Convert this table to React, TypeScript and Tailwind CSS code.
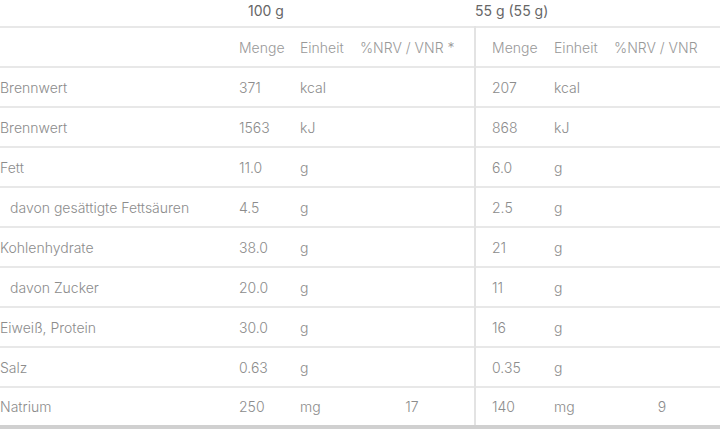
import React from "react";

type Row = {
  label: string;
  indent?: boolean;
  a: [string, string, string];
  b: [string, string, string];
};

const rows: Row[] = [
  { label: "Brennwert", a: ["371", "kcal", ""], b: ["207", "kcal", ""] },
  { label: "Brennwert", a: ["1563", "kJ", ""], b: ["868", "kJ", ""] },
  { label: "Fett", a: ["11.0", "g", ""], b: ["6.0", "g", ""] },
  { label: "davon gesättigte Fettsäuren", indent: true, a: ["4.5", "g", ""], b: ["2.5", "g", ""] },
  { label: "Kohlenhydrate", a: ["38.0", "g", ""], b: ["21", "g", ""] },
  { label: "davon Zucker", indent: true, a: ["20.0", "g", ""], b: ["11", "g", ""] },
  { label: "Eiweiß, Protein", a: ["30.0", "g", ""], b: ["16", "g", ""] },
  { label: "Salz", a: ["0.63", "g", ""], b: ["0.35", "g", ""] },
  { label: "Natrium", a: ["250", "mg", "17"], b: ["140", "mg", "9"] },
];

const line = "border-b-2 border-[#e8e8e8]";

export default function App() {
  return (
    <div
      className="w-[720px] h-[430px] overflow-hidden bg-white text-[14px] font-light text-[#8c8c8c]"
      style={{ fontFamily: "Inter, Roboto, 'Liberation Sans', sans-serif" }}
    >
      <table className="w-[720px] border-collapse table-fixed">
        <colgroup>
          <col className="w-[239px]" />
          <col className="w-[61px]" />
          <col className="w-[60px]" />
          <col className="w-[115px]" />
          <col className="w-[79px]" />
          <col className="w-[60px]" />
          <col className="w-[106px]" />
        </colgroup>
        <thead>
          <tr className={`h-[26px] ${line}`}>
            <th className="p-0" />
            <th colSpan={3} className="p-0 pl-[9px] pb-[5px] text-left font-normal text-[#666]">
              100 g
            </th>
            <th colSpan={3} className="p-0 pb-[5px] text-left font-normal text-[#666]">
              55 g (55 g)
            </th>
          </tr>
          <tr className={`h-[40px] ${line}`}>
            <th className="p-0" />
            <th className="p-0 text-left font-light text-[#999]">Menge</th>
            <th className="p-0 text-left font-light text-[#999]">Einheit</th>
            <th className="p-0 text-left font-light text-[#999] border-r-2 border-[#e3e3e3]">
              %NRV / VNR *
            </th>
            <th className="p-0 pl-[16px] text-left font-light text-[#999]">Menge</th>
            <th className="p-0 text-left font-light text-[#999]">Einheit</th>
            <th className="p-0 text-left font-light text-[#999]">%NRV / VNR</th>
          </tr>
        </thead>
        <tbody>
          {rows.map((r, i) => (
            <tr
              key={i}
              className={`h-[40px] ${
                i === rows.length - 1 ? "border-b-4 border-[#d0d0d0]" : line
              }`}
            >
              <td className={`p-0 ${r.indent ? "pl-[10px]" : ""}`}>{r.label}</td>
              <td className="p-0">{r.a[0]}</td>
              <td className="p-0">{r.a[1]}</td>
              <td className="p-0 pr-[10px] text-center border-r-2 border-[#e3e3e3]">{r.a[2]}</td>
              <td className="p-0 pl-[16px]">{r.b[0]}</td>
              <td className="p-0">{r.b[1]}</td>
              <td className="p-0 pr-[10px] text-center">{r.b[2]}</td>
            </tr>
          ))}
        </tbody>
      </table>
    </div>
  );
}
